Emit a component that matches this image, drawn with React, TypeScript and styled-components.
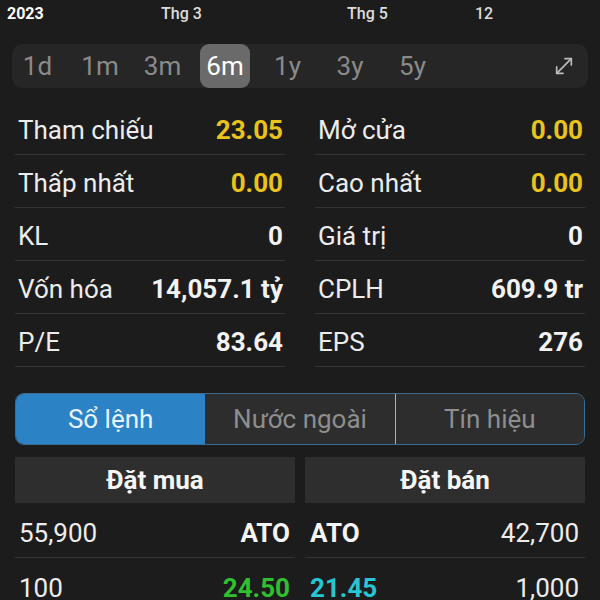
import React from "react";
import styled, { createGlobalStyle } from "styled-components";

const Global = createGlobalStyle`
  html, body { margin: 0; padding: 0; background: #1c1c1c; }
  body { font-family: Roboto, "Noto Sans", "Liberation Sans", sans-serif; color: #ececec; }
`;

const Page = styled.div`
  width: 600px;
  height: 600px;
  overflow: hidden;
  background: #1c1c1c;
  display: flex;
  flex-direction: column;
  & > * {
    flex-shrink: 0;
  }
`;

const Axis = styled.div`
  position: relative;
  height: 44px;
`;

const Tick = styled.span<{ $x: number; $strong?: boolean }>`
  position: absolute;
  top: 5px;
  left: ${(p) => p.$x}px;
  font-size: 16px;
  line-height: 18px;
  font-weight: ${(p) => (p.$strong ? 700 : 500)};
  color: ${(p) => (p.$strong ? "#ffffff" : "#dcdcdc")};
`;

const RangeBar = styled.div`
  margin: 0 12px;
  height: 44px;
  background: #262626;
  border-radius: 10px;
  display: flex;
  align-items: center;
  gap: 12.5px;
  padding-left: 0.5px;
`;

const RangeItem = styled.div<{ $active?: boolean }>`
  width: 50px;
  height: 44px;
  border-radius: 9px;
  display: flex;
  align-items: center;
  justify-content: center;
  font-size: 26px;
  color: ${(p) => (p.$active ? "#ffffff" : "#8a8a8a")};
  background: ${(p) => (p.$active ? "#6a6a6a" : "transparent")};
`;

const ExpandBtn = styled.div`
  margin-left: auto;
  margin-right: 13px;
  display: flex;
  align-items: center;
  color: #bdbdbd;
`;

const Stats = styled.div`
  margin-top: 14px;
  padding: 0 15px;
  display: grid;
  grid-template-columns: 1fr 1fr;
  column-gap: 30px;
`;

const StatRow = styled.div`
  box-sizing: border-box;
  height: 53px;
  border-bottom: 1px solid #333333;
  display: flex;
  align-items: center;
  justify-content: space-between;
  padding: 3px 2px 0 3px;
  font-size: 26px;
`;

const Label = styled.span`
  color: #ececec;
`;

const Value = styled.span<{ $tone?: "yellow" | "white" }>`
  font-weight: 700;
  color: ${(p) => (p.$tone === "yellow" ? "#e9c31b" : "#f2f2f2")};
`;

const Tabs = styled.div`
  margin: 26px 15px 0;
  height: 52px;
  box-sizing: border-box;
  border: 1.5px solid #3d6b8f;
  border-radius: 9px;
  overflow: hidden;
  display: grid;
  grid-template-columns: 1fr 1fr 1fr;
  background: #2d2d2d;
`;

const Tab = styled.div<{ $active?: boolean; $divider?: boolean }>`
  display: flex;
  align-items: center;
  justify-content: center;
  font-size: 26px;
  color: ${(p) => (p.$active ? "#e8f3ff" : "#8e8e8e")};
  background: ${(p) => (p.$active ? "#2b82c4" : "#2d2d2d")};
  border-left: ${(p) => (p.$divider ? "1.5px solid #b0b0b0" : "none")};
`;

const Book = styled.div`
  margin-top: 12px;
  padding: 0 15px;
  display: grid;
  grid-template-columns: 1fr 1fr;
  column-gap: 10px;
`;

const BookHead = styled.div`
  height: 46px;
  background: #2e2e2e;
  display: flex;
  align-items: center;
  justify-content: center;
  font-size: 26px;
  font-weight: 700;
  color: #f5f5f5;
`;

const BookCell = styled.div<{ $side: "buy" | "sell" }>`
  height: 55px;
  box-sizing: border-box;
  border-bottom: 1px solid #333333;
  display: flex;
  align-items: center;
  justify-content: space-between;
  padding: ${(p) => (p.$side === "buy" ? "6px 5px 0 4px" : "6px 6px 0 5px")};
  font-size: 26px;
`;

const Vol = styled.span`
  color: #ececec;
`;

const Price = styled.span<{ $tone?: "green" | "cyan" | "white" }>`
  font-weight: 700;
  color: ${(p) =>
    p.$tone === "green" ? "#2fbf2f" : p.$tone === "cyan" ? "#26c6d4" : "#f5f5f5"};
`;

const ExpandIcon = () => (
  <svg width="22" height="22" viewBox="0 0 24 24" fill="none" stroke="currentColor" strokeWidth="1.8" strokeLinecap="round" strokeLinejoin="round">
    <path d="M11 20H4v-7" />
    <path d="M13 4h7v7" />
    <path d="M20 4 4 20" />
  </svg>
);

const ranges = ["1d", "1m", "3m", "6m", "1y", "3y", "5y"];

const stats: [string, string, "yellow" | "white"][] = [
  ["Tham chiếu", "23.05", "yellow"],
  ["Mở cửa", "0.00", "yellow"],
  ["Thấp nhất", "0.00", "yellow"],
  ["Cao nhất", "0.00", "yellow"],
  ["KL", "0", "white"],
  ["Giá trị", "0", "white"],
  ["Vốn hóa", "14,057.1 tỷ", "white"],
  ["CPLH", "609.9 tr", "white"],
  ["P/E", "83.64", "white"],
  ["EPS", "276", "white"],
];

export default function App() {
  return (
    <Page>
      <Global />
      <Axis>
        <Tick $x={7} $strong>2023</Tick>
        <Tick $x={161}>Thg 3</Tick>
        <Tick $x={347}>Thg 5</Tick>
        <Tick $x={475}>12</Tick>
      </Axis>
      <RangeBar>
        {ranges.map((r) => (
          <RangeItem key={r} $active={r === "6m"}>
            {r}
          </RangeItem>
        ))}
        <ExpandBtn>
          <ExpandIcon />
        </ExpandBtn>
      </RangeBar>
      <Stats>
        {stats.map(([l, v, t]) => (
          <StatRow key={l}>
            <Label>{l}</Label>
            <Value $tone={t}>{v}</Value>
          </StatRow>
        ))}
      </Stats>
      <Tabs>
        <Tab $active>Sổ lệnh</Tab>
        <Tab>Nước ngoài</Tab>
        <Tab $divider>Tín hiệu</Tab>
      </Tabs>
      <Book>
        <BookHead>Đặt mua</BookHead>
        <BookHead>Đặt bán</BookHead>
        <BookCell $side="buy">
          <Vol>55,900</Vol>
          <Price>ATO</Price>
        </BookCell>
        <BookCell $side="sell">
          <Price>ATO</Price>
          <Vol>42,700</Vol>
        </BookCell>
        <BookCell $side="buy">
          <Vol>100</Vol>
          <Price $tone="green">24.50</Price>
        </BookCell>
        <BookCell $side="sell">
          <Price $tone="cyan">21.45</Price>
          <Vol>1,000</Vol>
        </BookCell>
      </Book>
    </Page>
  );
}
